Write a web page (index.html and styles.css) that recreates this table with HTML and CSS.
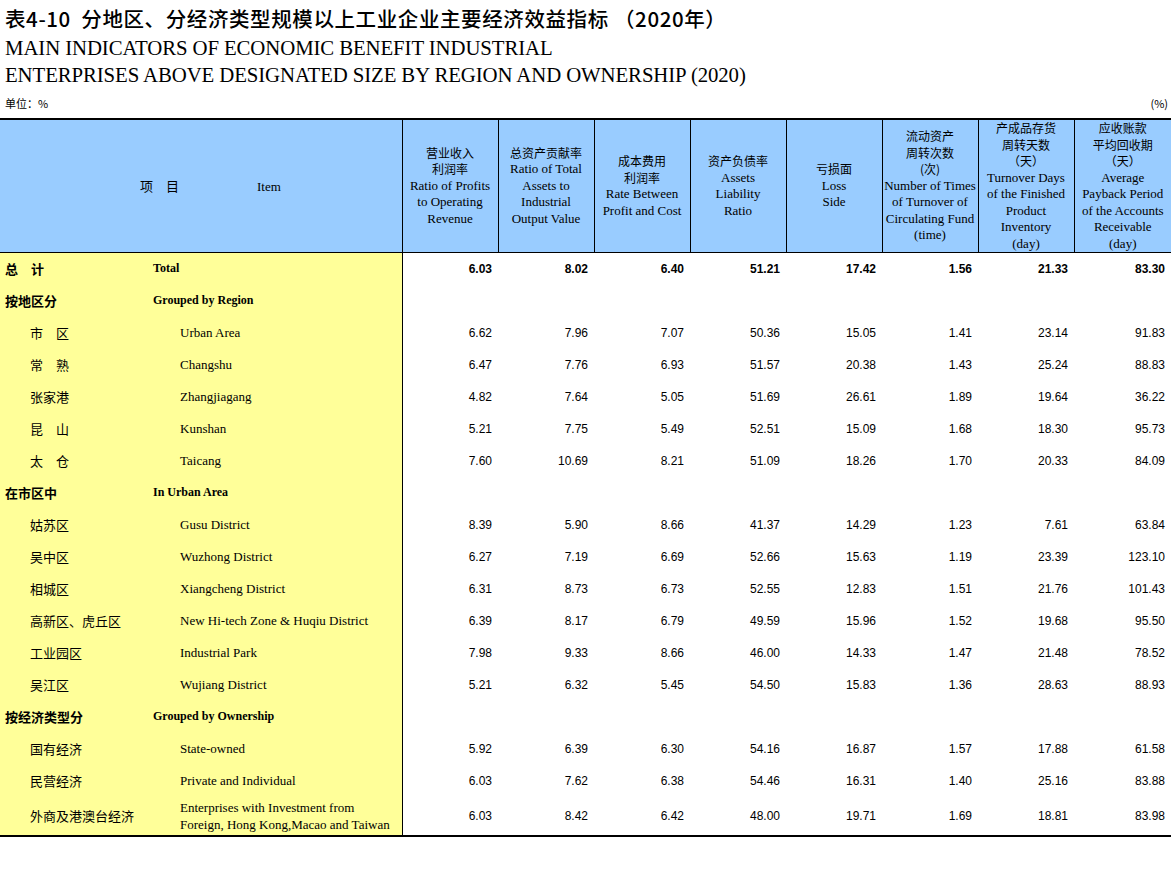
FILE: index.html
```html
<!DOCTYPE html>
<html lang="zh-CN">
<head>
<meta charset="utf-8">
<title>表4-10</title>
<link rel="stylesheet" href="styles.css">
</head>
<body>
<div class="page">
  <div class="title">表4-10&nbsp; 分地区、分经济类型规模以上工业企业主要经济效益指标&nbsp;（2020年）</div>
  <div class="en-title first">MAIN INDICATORS OF ECONOMIC BENEFIT INDUSTRIAL</div>
  <div class="en-title">ENTERPRISES ABOVE DESIGNATED SIZE BY REGION AND OWNERSHIP (2020)</div>
  <div class="unit-row"><span>单位：%</span><span>(%)</span></div>
  <table class="data">
    <colgroup>
      <col class="c-zh"><col class="c-en">
      <col class="c-num"><col class="c-num"><col class="c-num"><col class="c-num">
      <col class="c-num"><col class="c-num"><col class="c-num"><col class="c-last">
    </colgroup>
    <thead>
      <tr>
        <th colspan="2" class="item-head"><div class="hd"><span class="zh">项　目</span><span class="item-en">Item</span></div></th>
        <th><div class="hd"><div class="zh">营业收入</div><div class="zh">利润率</div><div>Ratio of Profits</div><div>to Operating</div><div>Revenue</div></div></th>
        <th><div class="hd"><div class="zh">总资产贡献率</div><div>Ratio of Total</div><div>Assets to</div><div>Industrial</div><div>Output Value</div></div></th>
        <th><div class="hd"><div class="zh">成本费用</div><div class="zh">利润率</div><div>Rate Between</div><div>Profit and Cost</div></div></th>
        <th><div class="hd"><div class="zh">资产负债率</div><div>Assets</div><div>Liability</div><div>Ratio</div></div></th>
        <th><div class="hd"><div class="zh">亏损面</div><div>Loss</div><div>Side</div></div></th>
        <th><div class="hd"><div class="zh">流动资产</div><div class="zh">周转次数</div><div class="zh">(次)</div><div>Number of Times</div><div>of Turnover of</div><div>Circulating Fund</div><div>(time)</div></div></th>
        <th><div class="hd"><div class="zh">产成品存货</div><div class="zh">周转天数</div><div class="zh">（天）</div><div>Turnover Days</div><div>of the Finished</div><div>Product</div><div>Inventory</div><div>(day)</div></div></th>
        <th><div class="hd"><div class="zh">应收账款</div><div class="zh">平均回收期</div><div class="zh">（天）</div><div>Average</div><div>Payback Period</div><div>of the Accounts</div><div>Receivable</div><div>(day)</div></div></th>
      </tr>
    </thead>
    <tbody>
      <tr class="group total">
        <td class="zh-cell">总　计</td><td class="en-cell">Total</td>
        <td>6.03</td><td>8.02</td><td>6.40</td><td>51.21</td><td>17.42</td><td>1.56</td><td>21.33</td><td>83.30</td>
      </tr>
      <tr class="group">
        <td class="zh-cell">按地区分</td><td class="en-cell">Grouped by Region</td>
        <td></td><td></td><td></td><td></td><td></td><td></td><td></td><td></td>
      </tr>
      <tr class="item">
        <td class="zh-cell">市　区</td><td class="en-cell">Urban Area</td>
        <td>6.62</td><td>7.96</td><td>7.07</td><td>50.36</td><td>15.05</td><td>1.41</td><td>23.14</td><td>91.83</td>
      </tr>
      <tr class="item">
        <td class="zh-cell">常　熟</td><td class="en-cell">Changshu</td>
        <td>6.47</td><td>7.76</td><td>6.93</td><td>51.57</td><td>20.38</td><td>1.43</td><td>25.24</td><td>88.83</td>
      </tr>
      <tr class="item">
        <td class="zh-cell">张家港</td><td class="en-cell">Zhangjiagang</td>
        <td>4.82</td><td>7.64</td><td>5.05</td><td>51.69</td><td>26.61</td><td>1.89</td><td>19.64</td><td>36.22</td>
      </tr>
      <tr class="item">
        <td class="zh-cell">昆　山</td><td class="en-cell">Kunshan</td>
        <td>5.21</td><td>7.75</td><td>5.49</td><td>52.51</td><td>15.09</td><td>1.68</td><td>18.30</td><td>95.73</td>
      </tr>
      <tr class="item">
        <td class="zh-cell">太　仓</td><td class="en-cell">Taicang</td>
        <td>7.60</td><td>10.69</td><td>8.21</td><td>51.09</td><td>18.26</td><td>1.70</td><td>20.33</td><td>84.09</td>
      </tr>
      <tr class="group">
        <td class="zh-cell">在市区中</td><td class="en-cell">In Urban Area</td>
        <td></td><td></td><td></td><td></td><td></td><td></td><td></td><td></td>
      </tr>
      <tr class="item">
        <td class="zh-cell">姑苏区</td><td class="en-cell">Gusu District</td>
        <td>8.39</td><td>5.90</td><td>8.66</td><td>41.37</td><td>14.29</td><td>1.23</td><td>7.61</td><td>63.84</td>
      </tr>
      <tr class="item">
        <td class="zh-cell">吴中区</td><td class="en-cell">Wuzhong District</td>
        <td>6.27</td><td>7.19</td><td>6.69</td><td>52.66</td><td>15.63</td><td>1.19</td><td>23.39</td><td>123.10</td>
      </tr>
      <tr class="item">
        <td class="zh-cell">相城区</td><td class="en-cell">Xiangcheng District</td>
        <td>6.31</td><td>8.73</td><td>6.73</td><td>52.55</td><td>12.83</td><td>1.51</td><td>21.76</td><td>101.43</td>
      </tr>
      <tr class="item">
        <td class="zh-cell">高新区、虎丘区</td><td class="en-cell">New Hi-tech Zone &amp; Huqiu District</td>
        <td>6.39</td><td>8.17</td><td>6.79</td><td>49.59</td><td>15.96</td><td>1.52</td><td>19.68</td><td>95.50</td>
      </tr>
      <tr class="item">
        <td class="zh-cell">工业园区</td><td class="en-cell">Industrial Park</td>
        <td>7.98</td><td>9.33</td><td>8.66</td><td>46.00</td><td>14.33</td><td>1.47</td><td>21.48</td><td>78.52</td>
      </tr>
      <tr class="item">
        <td class="zh-cell">吴江区</td><td class="en-cell">Wujiang District</td>
        <td>5.21</td><td>6.32</td><td>5.45</td><td>54.50</td><td>15.83</td><td>1.36</td><td>28.63</td><td>88.93</td>
      </tr>
      <tr class="group">
        <td class="zh-cell">按经济类型分</td><td class="en-cell">Grouped by Ownership</td>
        <td></td><td></td><td></td><td></td><td></td><td></td><td></td><td></td>
      </tr>
      <tr class="item">
        <td class="zh-cell">国有经济</td><td class="en-cell">State-owned</td>
        <td>5.92</td><td>6.39</td><td>6.30</td><td>54.16</td><td>16.87</td><td>1.57</td><td>17.88</td><td>61.58</td>
      </tr>
      <tr class="item">
        <td class="zh-cell">民营经济</td><td class="en-cell">Private and Individual</td>
        <td>6.03</td><td>7.62</td><td>6.38</td><td>54.46</td><td>16.31</td><td>1.40</td><td>25.16</td><td>83.88</td>
      </tr>
      <tr class="item last">
        <td class="zh-cell">外商及港澳台经济</td><td class="en-cell"><div class="two-line">Enterprises with Investment from</div><div class="two-line">Foreign, Hong Kong,Macao and Taiwan</div></td>
        <td>6.03</td><td>8.42</td><td>6.42</td><td>48.00</td><td>19.71</td><td>1.69</td><td>18.81</td><td>83.98</td>
      </tr>
    </tbody>
  </table>
</div>
</body>
</html>
```

FILE: styles.css
```css
* { box-sizing: border-box; }
html, body { margin: 0; padding: 0; background: #fff; }
body { color: #000; font-family: "Liberation Serif", "Noto Sans CJK SC", serif; }

.page { width: 1171px; }

.title {
  font-family: "Noto Sans CJK SC", "Liberation Sans", sans-serif;
  font-weight: 500;
  font-size: 20.5px;
  line-height: 28px;
  height: 32px;
  padding: 4px 0 0 5px;
  white-space: nowrap;
  text-spacing-trim: space-all;
  letter-spacing: 0.6px;
}

.en-title {
  font-family: "Liberation Serif", serif;
  font-size: 20.8px;
  line-height: 27px;
  height: 27px;
  padding-left: 5px;
  white-space: nowrap;
  letter-spacing: -0.1px;
}
.en-title.first { margin-top: 2px; }

.unit-row {
  display: flex;
  justify-content: space-between;
  font-family: "Noto Sans CJK SC", "Liberation Sans", sans-serif;
  font-size: 11px;
  line-height: 16px;
  padding: 7px 3px 0 5px;
  height: 30px;
}

.data {
  width: 1171px;
  border-collapse: collapse;
  table-layout: fixed;
  border-top: 2px solid #000;
  border-bottom: 2px solid #000;
}
.c-zh { width: 148px; }
.c-en { width: 254px; }
.c-num { width: 96px; }
.c-last { width: 97px; }

thead th {
  background: #99ccff;
  height: 132px;
  font-weight: normal;
  font-family: "Liberation Serif", serif;
  font-size: 13px;
  text-align: center;
  vertical-align: middle;
  padding: 0;
  border-left: 1px solid #000;
  border-bottom: 1px solid #000;
  white-space: nowrap;
}
thead th:first-child { border-left: none; }
.hd > div { height: 16.5px; line-height: 16.5px; }
.hd .zh {
  font-family: "Noto Sans CJK SC", sans-serif;
  font-size: 12px;
  text-spacing-trim: space-all;
}
.item-head { text-align: left; }
.item-head .hd { padding-left: 140px; line-height: 17px; }
.item-head .zh { font-size: 13px; }
.item-head .item-en { margin-left: 78px; font-family: "Liberation Serif", serif; font-size: 13px; }

tbody td {
  height: 32px;
  padding: 0 6px 0 0;
  text-align: right;
  vertical-align: middle;
  font-family: "Liberation Sans", Arial, sans-serif;
  font-size: 12px;
  white-space: nowrap;
}
tbody tr.last td { height: 39px; }

tbody td.zh-cell, tbody td.en-cell {
  background: #ffff99;
  text-align: left;
}
tbody td.zh-cell {
  font-family: "Noto Sans CJK SC", sans-serif;
  font-size: 13px;
  padding-left: 30px;
}
tbody td.en-cell {
  font-family: "Liberation Serif", serif;
  font-size: 13px;
  padding-left: 32px;
  border-right: 1px solid #000;
}
.two-line { height: 17px; line-height: 17px; }
tbody tr.group td.zh-cell { padding-left: 5px; font-weight: 700; }
tbody tr.group td.en-cell { padding-left: 5px; font-weight: 700; font-size: 12px; }
tbody tr.total td { font-weight: 700; }
```
